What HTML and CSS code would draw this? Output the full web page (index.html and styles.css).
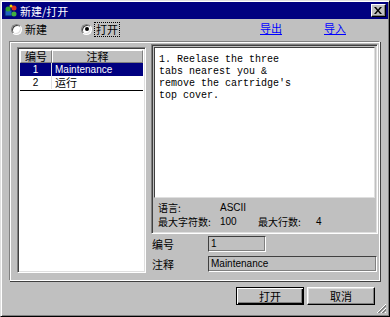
FILE: index.html
```html
<!DOCTYPE html>
<html>
<head>
<meta charset="utf-8">
<link rel="stylesheet" href="styles.css">
</head>
<body>
<div class="window">
  <div class="titlebar">
    <svg class="appicon" width="14" height="14" viewBox="0 0 14 14">
      <rect x="1" y="6" width="7" height="6" fill="#2060c0" stroke="#002060" stroke-width="1"/>
      <circle cx="4" cy="5" r="2.5" fill="#30a030"/>
      <circle cx="10" cy="4" r="2.5" fill="#e03020"/>
      <circle cx="10" cy="10" r="2.5" fill="#40b040"/>
      <circle cx="7" cy="2" r="1.5" fill="#f0d000"/>
    </svg>
    <span class="title">新建/打开</span>
    <span class="close">
      <svg width="8" height="7" viewBox="0 0 8 7"><path d="M0 0h2l2 2.5L6 0h2L5 3.5 8 7H6L4 4.5 2 7H0l3-3.5z" fill="#000"/></svg>
    </span>
  </div>
  <div class="body">
    <div class="radios">
      <label class="radio"><span class="dot"></span><span>新建</span></label>
      <label class="radio"><span class="dot on"></span><span class="focus">打开</span></label>
      <a class="link">导出</a>
      <a class="link">导入</a>
    </div>
    <div class="group">
      <div class="listbox">
        <div class="lhead"><div class="hc c1">编号</div><div class="hc c2">注释</div></div>
        <div class="rows">
          <div class="row sel"><div class="c1">1</div><div class="c2 lat">Maintenance</div></div>
          <div class="row"><div class="c1">2</div><div class="c2">运行</div></div>
        </div>
      </div>
      <div class="right">
        <div class="preview">
          <div class="textarea">1. Reelase the three
tabs nearest you &amp;
remove the cartridge's
top cover.</div>
          <div class="info">
            <div class="irow"><span class="k1">语言:</span><span class="lat">ASCII</span></div>
            <div class="irow"><span class="k1">最大字符数:</span><span class="lat v1">100</span><span class="k2">最大行数:</span><span class="lat">4</span></div>
          </div>
        </div>
        <div class="field"><span class="flabel">编号</span><span class="box short lat">1</span></div>
        <div class="field"><span class="flabel">注释</span><span class="box long lat">Maintenance</span></div>
      </div>
    </div>
    <div class="buttons">
      <span class="btn default"><span>打开</span></span>
      <span class="btn"><span>取消</span></span>
    </div>
    <svg class="grip" width="11" height="11" viewBox="0 0 11 11">
      <path d="M10 1L1 10M10 5L5 10M10 9L9 10" stroke="#fff" stroke-width="1"/>
      <path d="M10 2L2 10M10 3L3 10M10 6L6 10M10 7L7 10" stroke="#808080" stroke-width="1"/>
    </svg>
  </div>
</div>
</body>
</html>
```

FILE: styles.css
```css
* { box-sizing: border-box; }
html, body { margin: 0; padding: 0; }
body {
  width: 390px;
  height: 317px;
  background: #c0c0c0;
  font-family: "Noto Sans CJK SC", "Liberation Sans", sans-serif;
  font-size: 11px;
  color: #000;
  overflow: hidden;
}
.lat { font-family: "Liberation Sans", "Noto Sans CJK SC", sans-serif; font-size: 10px; }
.window {
  width: 390px;
  height: 317px;
  background: #c0c0c0;
  border: 1px solid;
  border-color: #dfdfdf #000 #000 #dfdfdf;
  box-shadow: inset 1px 1px #fff, inset -1px -1px #808080;
  padding: 1px;
  display: flex;
  flex-direction: column;
}
.titlebar {
  height: 17px;
  background: #000080;
  color: #fff;
  display: flex;
  align-items: center;
  padding-left: 2px;
  padding-right: 2px;
}
.appicon { display: block; margin-right: 2px; }
.title { font-size: 11px; line-height: 14px; }
.close {
  margin-left: auto;
  width: 15px;
  height: 13px;
  background: #c0c0c0;
  border: 1px solid;
  border-color: #fff #000 #000 #fff;
  box-shadow: inset -1px -1px #808080;
  display: flex;
  align-items: center;
  justify-content: center;
}
.close svg { display: block; margin-left: -1px; }
.body {
  flex: 1;
  display: flex;
  flex-direction: column;
  position: relative;
}
.radios {
  height: 22px;
  padding-top: 3px;
  padding-left: 9px;
  display: grid;
  grid-template-columns: 70px 179px 64px auto;
  align-items: start;
}
.radio { display: flex; align-items: center; gap: 3px; line-height: 13px; height: 14px; }
.dot {
  width: 11px;
  height: 11px;
  border-radius: 50%;
  background: #fff;
  border: 1px solid;
  border-color: #808080 #fff #fff #808080;
  box-shadow: inset 1px 1px #404040, inset -1px -1px #dfdfdf;
  position: relative;
}
.dot.on::after {
  content: "";
  position: absolute;
  left: 2.5px; top: 2.5px;
  width: 4px; height: 4px;
  border-radius: 50%;
  background: #000;
}
.focus { outline: 1px dotted #000; outline-offset: 0; padding: 0 1px; }
.link { color: #0000ff; text-decoration: underline; line-height: 13px; }
.group {
  margin-left: 7px;
  width: 371px;
  height: 240px;
  border: 1px solid;
  border-color: #808080 #fff #fff #808080;
  box-shadow: inset 1px 1px #fff, 1px 1px #404040;
  display: flex;
  padding: 2px 0 0 7px;
}
.listbox {
  margin-top: 3px;
  width: 129px;
  height: 226px;
  background: #fff;
  border: 1px solid;
  border-color: #808080 #fff #fff #808080;
  box-shadow: inset 1px 1px #404040, inset -1px -1px #dfdfdf;
  padding: 2px 2px 2px 2px;
}
.lhead { display: flex; height: 13px; }
.hc {
  background: #c0c0c0;
  border: 1px solid;
  border-color: #fff #808080 #808080 #fff;
  text-align: center;
  line-height: 11px;
  font-size: 11px;
}
.c1 { width: 32px; text-align: center; }
.c2 { flex: 1; }
.hc.c2 { text-align: center; }
.rows { border-bottom: 1px solid #000; margin-bottom: 0; padding-bottom: 1px; }
.row { display: flex; height: 13px; line-height: 13px; }
.row .c1 { border-right: 1px solid #dfdfdf; font-family: "Liberation Sans", sans-serif; font-size: 10px; }
.row .c2 { padding-left: 3px; }
.row.sel { background: #000080; color: #fff; }
.right {
  margin-left: 5px;
  display: flex;
  flex-direction: column;
}
.preview {
  width: 227px;
  height: 190px;
  border: 1px solid;
  border-color: #808080 #fff #fff #808080;
  box-shadow: 1px 1px #404040 inset, -1px -1px #dfdfdf inset;
  padding: 2px 2px 0 2px;
  display: flex;
  flex-direction: column;
}
.textarea {
  height: 151px;
  background: #fff;
  border: 1px solid;
  border-color: #404040 #dfdfdf #dfdfdf #404040;
  white-space: pre;
  font-family: "Liberation Mono", "Courier New", monospace;
  font-size: 10px;
  line-height: 12px;
  color: #000;
  padding: 6px 0 0 4px;
}
.info { padding: 3px 0 0 4px; font-size: 10px; }
.irow { display: flex; align-items: center; height: 14px; line-height: 14px; }
.k1 { width: 62px; }
.v1 { width: 38px; }
.k2 { width: 58px; }
.field { display: flex; align-items: center; height: 20px; margin-top: 0; }
.field:first-of-type { margin-top: 3px; }
.flabel { width: 57px; padding-left: 1px; }
.box {
  height: 16px;
  border: 1px solid;
  border-color: #404040 #fff #fff #404040;
  box-shadow: inset -1px -1px #808080;
  line-height: 14px;
  padding-left: 2px;
  background: #c0c0c0;
}
.short { width: 58px; }
.long { width: 169px; }
.buttons {
  display: flex;
  justify-content: flex-end;
  gap: 3px;
  padding-right: 13px;
  margin-top: 6px;
}
.btn {
  width: 68px;
  height: 18px;
  background: #c0c0c0;
  border: 1px solid;
  border-color: #fff #000 #000 #fff;
  box-shadow: inset -1px -1px #808080, inset 1px 1px #dfdfdf;
  display: flex;
  align-items: center;
  justify-content: center;
  line-height: 14px;
}
.btn.default {
  border-color: #000;
  box-shadow: inset 1px 1px #fff, inset -1px -1px #000, inset -2px -2px #808080;
}
.grip { position: absolute; right: 1px; bottom: 1px; }
```
